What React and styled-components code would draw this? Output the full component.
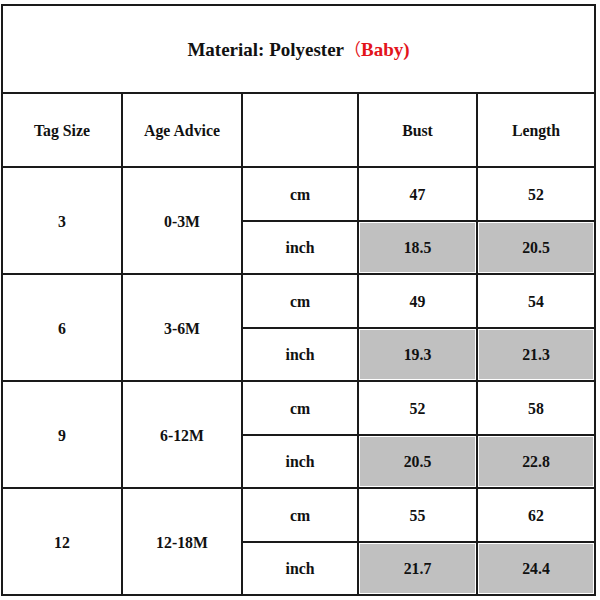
import React from "react";
import styled, { createGlobalStyle } from "styled-components";

const GlobalStyle = createGlobalStyle`
  html, body {
    margin: 0;
    padding: 0;
    background: #fff;
  }
`;

const rows = [
  { tag: "3", age: "0-3M", cm: ["47", "52"], inch: ["18.5", "20.5"] },
  { tag: "6", age: "3-6M", cm: ["49", "54"], inch: ["19.3", "21.3"] },
  { tag: "9", age: "6-12M", cm: ["52", "58"], inch: ["20.5", "22.8"] },
  { tag: "12", age: "12-18M", cm: ["55", "62"], inch: ["21.7", "24.4"] }
];

const Page = styled.div`
  width: 600px;
  height: 600px;
  padding: 4px 0 0 1px;
  box-sizing: border-box;
  background: #fff;
`;

const Chart = styled.table`
  width: 595px;
  height: 592px;
  border-collapse: collapse;
  table-layout: fixed;
`;

const Cell = styled.td`
  border: 2px solid #1a1a1a;
  text-align: center;
  vertical-align: middle;
  padding: 2px 0 0;
  font-family: "Liberation Serif", "Times New Roman", serif;
  font-weight: 700;
  font-size: 15.8px;
  color: #111;
  background: ${p => (p.$shaded ? "#c0c0c0" : "#fff")};
  box-shadow: ${p => (p.$shaded ? "inset 0 0 0 1px #fff" : "none")};
`;

const TitleCell = styled(Cell)`
  font-size: 19px;
  padding: 0 0 2px;
`;

const Red = styled.span`
  color: #e3141b;
`;

const Paren = styled.span`
  font-family: "Noto Sans CJK SC", sans-serif;
  font-weight: normal;
  font-size: 17px;
`;

const TitleRow = styled.tr`
  height: 88px;
`;

const HeadRow = styled.tr`
  height: 74px;
`;

const SubRow = styled.tr`
  height: 53.5px;
`;

export default function App() {
  return (
    <Page>
      <GlobalStyle />
      <Chart>
        <colgroup>
          <col style={{ width: 120 }} />
          <col style={{ width: 120 }} />
          <col style={{ width: 116 }} />
          <col style={{ width: 119 }} />
          <col style={{ width: 118 }} />
        </colgroup>
        <tbody>
          <TitleRow>
            <TitleCell colSpan={5}>
              Material: Polyester
              <Red>
                <Paren>（</Paren>Baby)
              </Red>
            </TitleCell>
          </TitleRow>
          <HeadRow>
            <Cell>Tag Size</Cell>
            <Cell>Age Advice</Cell>
            <Cell />
            <Cell>Bust</Cell>
            <Cell>Length</Cell>
          </HeadRow>
          {rows.map(row => (
            <React.Fragment key={row.tag}>
              <SubRow>
                <Cell rowSpan={2}>{row.tag}</Cell>
                <Cell rowSpan={2}>{row.age}</Cell>
                <Cell>cm</Cell>
                <Cell>{row.cm[0]}</Cell>
                <Cell>{row.cm[1]}</Cell>
              </SubRow>
              <SubRow>
                <Cell>inch</Cell>
                <Cell $shaded>{row.inch[0]}</Cell>
                <Cell $shaded>{row.inch[1]}</Cell>
              </SubRow>
            </React.Fragment>
          ))}
        </tbody>
      </Chart>
    </Page>
  );
}
